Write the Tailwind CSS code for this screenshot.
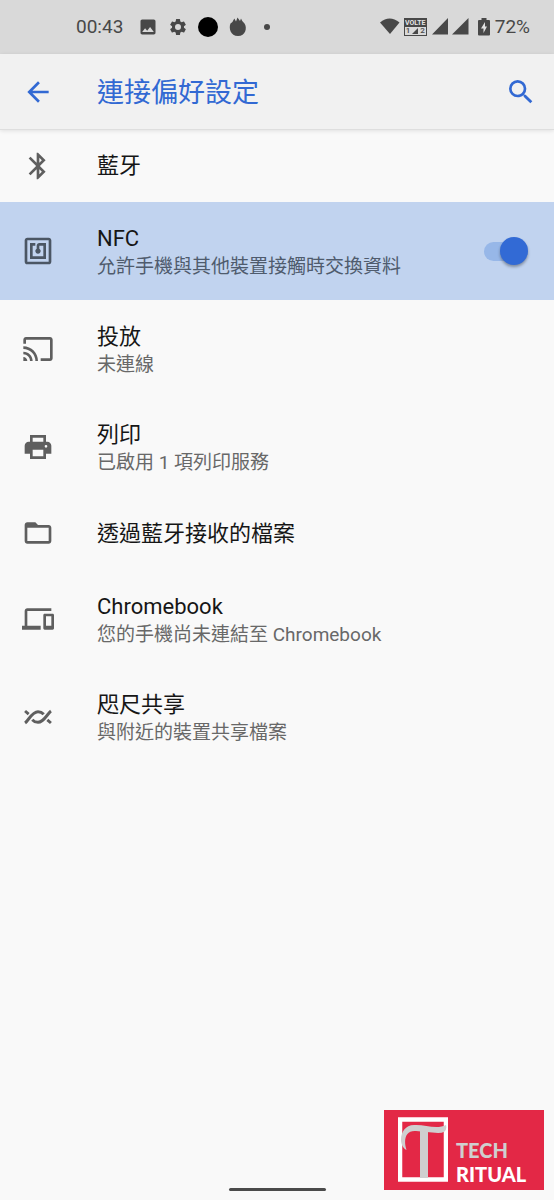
<!DOCTYPE html>
<html lang="zh-Hant">
<head>
<meta charset="utf-8">
<meta name="viewport" content="width=device-width, initial-scale=1">
<title>連接偏好設定</title>
<script src="https://cdn.jsdelivr.net/npm/@tailwindcss/browser@4"></script>
</head>
<body class="flex min-h-screen flex-col bg-[#f9f9f9] font-[Roboto,'Noto_Sans_CJK_TC',sans-serif] text-[#161616]">
<div class="flex h-[54px] items-center bg-[#d9d9d9] pr-6 pl-[76px] text-[19px] text-[#484848]">
  <span class="w-[62px]">00:43</span>
  <div class="flex flex-1 items-center gap-[10px]">
    <svg class="size-5" viewBox="0 0 24 24" fill="currentColor" aria-hidden="true"><path d="M21 19V5c0-1.100-.9-2-2-2H5c-1.100 0-2 .9-2 2v14c0 1.100.9 2 2 2h14c1.100 0 2-.9 2-2zM8.500 13.500l2.500 3.010L14.500 12l4.500 6H5l3.500-4.500z"/></svg>
    <svg class="size-5" viewBox="0 0 24 24" fill="currentColor" aria-hidden="true"><path d="M19.140 12.940c.04-.3.06-.61.06-.94s-.02-.64-.07-.94l2.030-1.580a.49.49 0 0 0 .12-.61l-1.920-3.320a.49.49 0 0 0-.59-.22l-2.390.96a7 7 0 0 0-1.620-.94l-.36-2.540a.48.48 0 0 0-.48-.41h-3.840a.47.47 0 0 0-.47.41l-.36 2.540c-.59.24-1.130.57-1.620.94l-2.390-.96a.47.47 0 0 0-.59.22L2.740 8.870a.47.47 0 0 0 .12.61l2.030 1.580a6 6 0 0 0-.02 1.880l-2.030 1.580a.49.49 0 0 0-.12.61l1.920 3.320c.12.22.37.29.59.22l2.390-.96c.5.38 1.030.7 1.620.94l.36 2.540c.05.24.24.41.48.41h3.840c.24 0 .44-.17.47-.41l.36-2.540c.59-.24 1.130-.56 1.620-.94l2.390.96c.22.08.47 0 .59-.22l1.920-3.320a.47.47 0 0 0-.12-.61zM12 15.600a3.600 3.600 0 1 1 0-7.200 3.600 3.600 0 0 1 0 7.200z"/></svg>
    <span class="size-5 rounded-full bg-black"></span>
    <svg class="size-5" viewBox="0 0 20 20" fill="currentColor" aria-hidden="true"><path d="M2.500 6.500Q5 5 6.300 1.500L8 4.500 9.500.5 12 4l1-2.500q1 3 3.500 5C19.500 11 17.500 19 10 19S.5 11 2.500 6.500z"/></svg>
    <span class="ml-[6px] size-[6px] rounded-full bg-current"></span>
  </div>
  <svg class="h-5 w-5" viewBox="0 0 20 20" fill="currentColor" aria-hidden="true"><path d="M0 5.500Q9.500-2.500 19.500 5.500L10 17z"/></svg>
  <div class="mx-1 flex h-[18px] w-[23px] flex-col overflow-hidden border border-[#484848] font-[Roboto,sans-serif]">
    <span class="flex h-2 items-center justify-center bg-[#484848] text-[7px] leading-none font-bold text-[#e4e4e4]">VOLTE</span>
    <span class="flex h-2 items-center justify-around text-[8px] leading-none font-medium"><span>1</span><svg class="size-[6px]" viewBox="0 0 6 6" fill="currentColor" aria-hidden="true"><path d="M0 6l6-6v6z"/></svg><span>2</span></span>
  </div>
  <svg class="h-5 w-[38px]" viewBox="0 0 38 20" fill="currentColor" aria-hidden="true"><path d="M1 17.500L17 1v16.500zM21 17.500L37.500 1v16.500z"/></svg>
  <svg class="mr-[5px] ml-[9px] h-5 w-3" viewBox="0 0 12 20" aria-hidden="true"><path d="M3.500 1h5v2H11q1 0 1 1v13.500q0 1-1 1H1q-1 0-1-1V4q0-1 1-1h2.500z" fill="#484848"/><path d="M7 5L3 11.500h2.500V16L9 9.500H7z" fill="#e2e2e2"/></svg>
  <span>72%</span>
</div>
<header class="relative flex h-[76px] items-center border-b border-[#dedede] bg-[#f1f1f1] pr-[17px] pl-[22px] text-[#3269d3] shadow-[0_1px_4px_#0000001a]">
  <button type="button" aria-label="返回" class="mr-[43px]"><svg class="size-8" viewBox="0 0 24 24" fill="currentColor"><path d="M20 11H7.830l5.590-5.590L12 4l-8 8 8 8 1.410-1.410L7.830 13H20v-2z"/></svg></button>
  <h1 class="flex-1 pt-[2px] text-[27px] leading-9">連接偏好設定</h1>
  <button type="button" aria-label="搜尋"><svg class="size-8" viewBox="0 0 24 24" fill="currentColor"><path d="M15.500 14h-.79l-.28-.27A6.470 6.470 0 0 0 16 9.500 6.500 6.500 0 1 0 9.500 16c1.610 0 3.090-.59 4.230-1.570l.27.28v.79l5 4.990L20.490 19l-4.990-5zm-6 0a4.500 4.500 0 1 1 0-9 4.500 4.500 0 0 1 0 9z"/></svg></button>
</header>
<main class="flex-1">
  <a href="#bluetooth" class="flex h-[72px] items-center gap-[43px] px-[22px]">
    <svg class="size-8 shrink-0 text-[#5f5f5f]" viewBox="0 0 24 24" fill="currentColor" aria-hidden="true"><path d="M17.710 7.710L12 2h-1v7.590L6.410 5 5 6.410 10.590 12 5 17.590 6.410 19 11 14.410V22h1l5.710-5.710-4.300-4.290 4.300-4.290zM13 5.830l1.880 1.880L13 9.590V5.830zm1.880 10.460L13 18.170v-3.760l1.880 1.880z"/></svg>
    <span class="text-[22px] leading-7">藍牙</span>
  </a>
  <label class="flex h-[98px] items-center gap-[43px] bg-[#c1d3ef] pr-[26px] pl-[22px]">
    <svg class="size-8 shrink-0 text-[#4b5664]" viewBox="0 0 24 24" fill="currentColor" aria-hidden="true"><path d="M20 2H4c-1.100 0-2 .9-2 2v16c0 1.100.9 2 2 2h16c1.100 0 2-.9 2-2V4c0-1.100-.9-2-2-2zm0 18H4V4h16v16zM18 6h-5c-1.100 0-2 .9-2 2v2.280c-.6.350-1 .98-1 1.720 0 1.100.9 2 2 2s2-.9 2-2c0-.74-.4-1.380-1-1.720V8h3v8H8V8h2V6H6v12h12V6z"/></svg>
    <span class="flex flex-1 flex-col pt-[3px]">
      <span class="text-[22px] leading-7">NFC</span>
      <span class="text-[19px] leading-7 text-[#4f5b6d]">允許手機與其他裝置接觸時交換資料</span>
    </span>
    <span class="relative flex h-7 w-11 items-center">
      <input type="checkbox" role="switch" checked aria-label="NFC" class="h-[19px] w-10 appearance-none rounded-full bg-[#97b7e8]">
      <span class="pointer-events-none absolute right-0 size-7 rounded-full bg-[#326ad5] shadow-[0_2px_3px_#00000055]"></span>
    </span>
  </label>
  <a href="#cast" class="flex h-[98px] items-center gap-[43px] px-[22px]">
    <svg class="size-8 shrink-0 text-[#5f5f5f]" viewBox="0 0 24 24" fill="currentColor" aria-hidden="true"><path d="M21 3H3c-1.100 0-2 .9-2 2v3h2V5h18v14h-7v2h7c1.100 0 2-.9 2-2V5c0-1.100-.9-2-2-2zM1 18v3h3c0-1.660-1.340-3-3-3zm0-4v2c2.760 0 5 2.240 5 5h2c0-3.870-3.130-7-7-7zm0-4v2a9 9 0 0 1 9 9h2c0-6.080-4.930-11-11-11z"/></svg>
    <span class="flex flex-col pt-[3px]"><span class="text-[22px] leading-7">投放</span><span class="text-[19px] leading-7 text-[#686868]">未連線</span></span>
  </a>
  <a href="#print" class="flex h-[98px] items-center gap-[43px] px-[22px]">
    <svg class="size-8 shrink-0 text-[#5f5f5f]" viewBox="0 0 24 24" fill="currentColor" fill-rule="evenodd" aria-hidden="true"><path d="M19 8h-1V3H6v5H5c-1.660 0-3 1.340-3 3v6h4v4h12v-4h4v-6c0-1.660-1.340-3-3-3zM8 5h8v3H8V5zm8 14H8v-5h8v5zm3-7.500a1 1 0 1 1-2 0 1 1 0 0 1 2 0z"/></svg>
    <span class="flex flex-col pt-[3px]"><span class="text-[22px] leading-7">列印</span><span class="text-[19px] leading-7 text-[#686868]">已啟用 1 項列印服務</span></span>
  </a>
  <a href="#files" class="flex h-[74px] items-center gap-[43px] px-[22px]">
    <svg class="size-8 shrink-0 text-[#5f5f5f]" viewBox="0 0 24 24" fill="currentColor" aria-hidden="true"><path d="M20 6h-8l-2-2H4c-1.100 0-2 .9-2 2v12c0 1.100.9 2 2 2h16c1.100 0 2-.9 2-2V8c0-1.100-.9-2-2-2zm0 12H4V8h16v10z"/></svg>
    <span class="pt-[2px] text-[22px] leading-7">透過藍牙接收的檔案</span>
  </a>
  <a href="#chromebook" class="flex h-[98px] items-center gap-[43px] px-[22px]">
    <svg class="size-8 shrink-0 text-[#5f5f5f]" viewBox="0 0 24 24" fill="currentColor" aria-hidden="true"><path d="M4 6h18V4H4c-1.100 0-2 .9-2 2v11H0v3h14v-3H4V6zm19 2h-6c-.55 0-1 .45-1 1v10c0 .55.45 1 1 1h6c.55 0 1-.45 1-1V9c0-.55-.45-1-1-1zm-1 9h-4v-7h4v7z"/></svg>
    <span class="flex flex-col pt-[3px]"><span class="text-[22px] leading-7">Chromebook</span><span class="text-[19px] leading-7 text-[#686868]">您的手機尚未連結至 Chromebook</span></span>
  </a>
  <a href="#nearby" class="flex h-[98px] items-center gap-[43px] px-[22px]">
    <svg class="size-8 shrink-0 text-[#5f5f5f]" viewBox="0 0 24 24" fill="none" stroke="currentColor" stroke-width="2.200" aria-hidden="true"><path d="M2.300 16.500C5 14.500 7.500 8 12 8q2.500 0 4.300 2M21.700 7.500C19 9.500 16.500 16 12 16q-2.500 0-4.300-2M2.300 7.500L5 9.800M19 14.200l2.700 2.300"/></svg>
    <span class="flex flex-col pt-[3px]"><span class="text-[22px] leading-7">咫尺共享</span><span class="text-[19px] leading-7 text-[#686868]">與附近的裝置共享檔案</span></span>
  </a>
</main>
<footer class="relative flex h-[90px] items-end justify-center pb-[9px]">
  <span class="h-[3px] w-[97px] rounded-full bg-[#4b4b4b]"></span>
  <div class="absolute right-[10px] bottom-[10px] flex h-20 w-40 items-start bg-[#e32846] pt-[7px] pl-[14px] font-[Lato,sans-serif] text-[20px] leading-6 font-black">
    <svg class="mr-2 h-[65px] w-[50px] shrink-0" viewBox="0 0 50 65" aria-hidden="true"><path d="M2 2.500h46v60H2z" fill="none" stroke="#fff" stroke-width="4.500"/><path d="M22 11h8v50h-8z" fill="#cfcfcf"/><path d="M8.500 33C-1 28 2 8 16 8c10-1 22 5 32 0q2 8-8 8-12-1-22-2C8 13 5 22 8.500 33z" fill="#cfcfcf"/></svg>
    <div class="flex flex-col pt-[21px]"><span class="text-[#cfcfcf]">TECH</span><span class="text-white">RITUAL</span></div>
  </div>
</footer>
</body>
</html>
